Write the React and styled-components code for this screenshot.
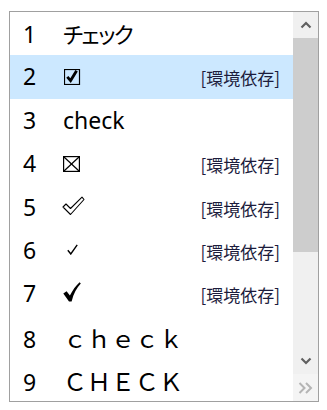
import React from "react";
import styled, { createGlobalStyle } from "styled-components";

const Global = createGlobalStyle`
  html, body { margin: 0; padding: 0; background: #ffffff; }
  body { font-family: "Noto Sans", "Noto Sans CJK JP", sans-serif; }
`;

const Page = styled.div`
  width: 327px;
  height: 410px;
  padding: 11px 0 0 9px;
  box-sizing: border-box;
`;

const ListBox = styled.div`
  width: 310px;
  height: 391px;
  box-sizing: border-box;
  border: 1px solid #a0a0a0;
  display: flex;
  background: #ffffff;
`;

const List = styled.div`
  flex: 1;
  display: flex;
  flex-direction: column;
  overflow: hidden;
`;

const Row = styled.div`
  height: 43.4px;
  flex: none;
  display: flex;
  align-items: baseline;
  padding: 0 13px;
  background: ${(p) => (p.$selected ? "#cce8ff" : "transparent")};
  line-height: 43.4px;
  color: #000;
`;

const Num = styled.span`
  width: 40px;
  flex: none;
  font-family: "Noto Sans", sans-serif;
  font-size: 23px;
`;

const Cand = styled.span`
  flex: 1;
  white-space: nowrap;
  font-size: ${(p) => p.$size || 23}px;
  letter-spacing: ${(p) => p.$track || 0}px;
  font-family: ${(p) =>
    p.$cjk ? '"Noto Sans CJK JP", sans-serif' : '"Noto Sans", "Noto Sans CJK JP", sans-serif'};
  font-feature-settings: ${(p) => (p.$palt ? '"palt"' : "normal")};
`;

const Note = styled.span`
  flex: none;
  font-family: "Noto Sans CJK JP", sans-serif;
  font-size: 17px;
  color: #1c1c3c;
`;

const Mark = styled.svg`
  display: inline-block;
  vertical-align: ${(p) => p.$raise || 0}px;
  margin-left: ${(p) => p.$shift || 0}px;
`;

const ScrollBar = styled.div`
  width: 25px;
  flex: none;
  display: flex;
  flex-direction: column;
  background: #f0f0f0;
`;

const ArrowButton = styled.div`
  height: 26px;
  flex: none;
  display: flex;
  align-items: center;
  justify-content: center;
`;

const Thumb = styled.div`
  height: 214px;
  flex: none;
  background: #cdcdcd;
`;

const Track = styled.div`
  flex: 1;
`;

const Corner = styled.div`
  height: 27px;
  flex: none;
  display: flex;
  align-items: center;
  justify-content: center;
  background: #f4f4f4;
`;

const Chevron = ({ up }) => (
  <svg width="12" height="8" viewBox="0 0 12 8">
    <polyline
      points={up ? "1.5,6.5 6,2 10.5,6.5" : "1.5,1.5 6,6 10.5,1.5"}
      fill="none"
      stroke="#606060"
      strokeWidth="2.2"
    />
  </svg>
);

const DoubleChevron = () => (
  <svg width="15" height="12" viewBox="0 0 15 12">
    <polyline points="1.5,1 6.5,6 1.5,11" fill="none" stroke="#b4b4b4" strokeWidth="2" />
    <polyline points="8,1 13,6 8,11" fill="none" stroke="#b4b4b4" strokeWidth="2" />
  </svg>
);

const BallotCheck = () => (
  <Mark width="17" height="16" viewBox="0 0 17 16" $shift={1} aria-label="☑">
    <rect x="0.5" y="0.5" width="15" height="15" fill="none" stroke="#000" strokeWidth="1.2" />
    <polyline
      points="3.3,7.8 6.6,11.6 12.6,1.8"
      fill="none"
      stroke="#000"
      strokeWidth="2.8"
      strokeLinejoin="miter"
    />
  </Mark>
);

const BallotX = () => (
  <Mark width="17" height="16" viewBox="0 0 17 16" aria-label="☒">
    <rect x="0.6" y="0.6" width="15.8" height="14.8" fill="none" stroke="#000" strokeWidth="1.2" />
    <line x1="1" y1="1" x2="16" y2="15" stroke="#000" strokeWidth="1.2" />
    <line x1="16" y1="1" x2="1" y2="15" stroke="#000" strokeWidth="1.2" />
  </Mark>
);

const OutlineCheck = () => (
  <Mark width="23" height="20" viewBox="0 0 23 20" $shift={-1} aria-label="🗸">
    <path
      d="M1 11 L4 8 L8.5 12.5 L20 1.2 L22 3.5 L8.5 18.5 Z"
      fill="none"
      stroke="#000"
      strokeWidth="1.1"
      strokeLinejoin="round"
    />
  </Mark>
);

const LightCheck = () => (
  <Mark width="11" height="11" viewBox="0 0 11 11" $shift={4} $raise={4} aria-label="✓">
    <path d="M0.8 6.2 L3.8 10 L10.2 0.8" fill="none" stroke="#000" strokeWidth="1.4" />
  </Mark>
);

const HeavyCheck = () => (
  <Mark width="18" height="20" viewBox="0 0 18 20" aria-label="✔">
    <path
      d="M0.3 11.6 L3.6 9.2 L6.9 13.6 C9.6 8 13 3.6 16.6 0.2 L17.8 1.6 C13.8 5.8 10.6 11.6 8.6 19.4 L6 19.4 Z"
      fill="#000"
    />
  </Mark>
);

const NOTE = "[環境依存]";

export default function App() {
  return (
    <Page>
      <Global />
      <ListBox>
        <List>
          <Row>
            <Num>1</Num>
            <Cand $cjk $palt $size={22} $track={-1.5}>チェック</Cand>
          </Row>
          <Row $selected>
            <Num>2</Num>
            <Cand>
              <BallotCheck />
            </Cand>
            <Note>{NOTE}</Note>
          </Row>
          <Row>
            <Num>3</Num>
            <Cand>check</Cand>
          </Row>
          <Row>
            <Num>4</Num>
            <Cand>
              <BallotX />
            </Cand>
            <Note>{NOTE}</Note>
          </Row>
          <Row>
            <Num>5</Num>
            <Cand>
              <OutlineCheck />
            </Cand>
            <Note>{NOTE}</Note>
          </Row>
          <Row>
            <Num>6</Num>
            <Cand>
              <LightCheck />
            </Cand>
            <Note>{NOTE}</Note>
          </Row>
          <Row>
            <Num>7</Num>
            <Cand>
              <HeavyCheck />
            </Cand>
            <Note>{NOTE}</Note>
          </Row>
          <Row>
            <Num>8</Num>
            <Cand $cjk $size={24}>ｃｈｅｃｋ</Cand>
          </Row>
          <Row>
            <Num>9</Num>
            <Cand $cjk $size={24}>ＣＨＥＣＫ</Cand>
          </Row>
        </List>
        <ScrollBar>
          <ArrowButton>
            <Chevron up />
          </ArrowButton>
          <Thumb />
          <Track />
          <ArrowButton>
            <Chevron />
          </ArrowButton>
          <Corner>
            <DoubleChevron />
          </Corner>
        </ScrollBar>
      </ListBox>
    </Page>
  );
}
